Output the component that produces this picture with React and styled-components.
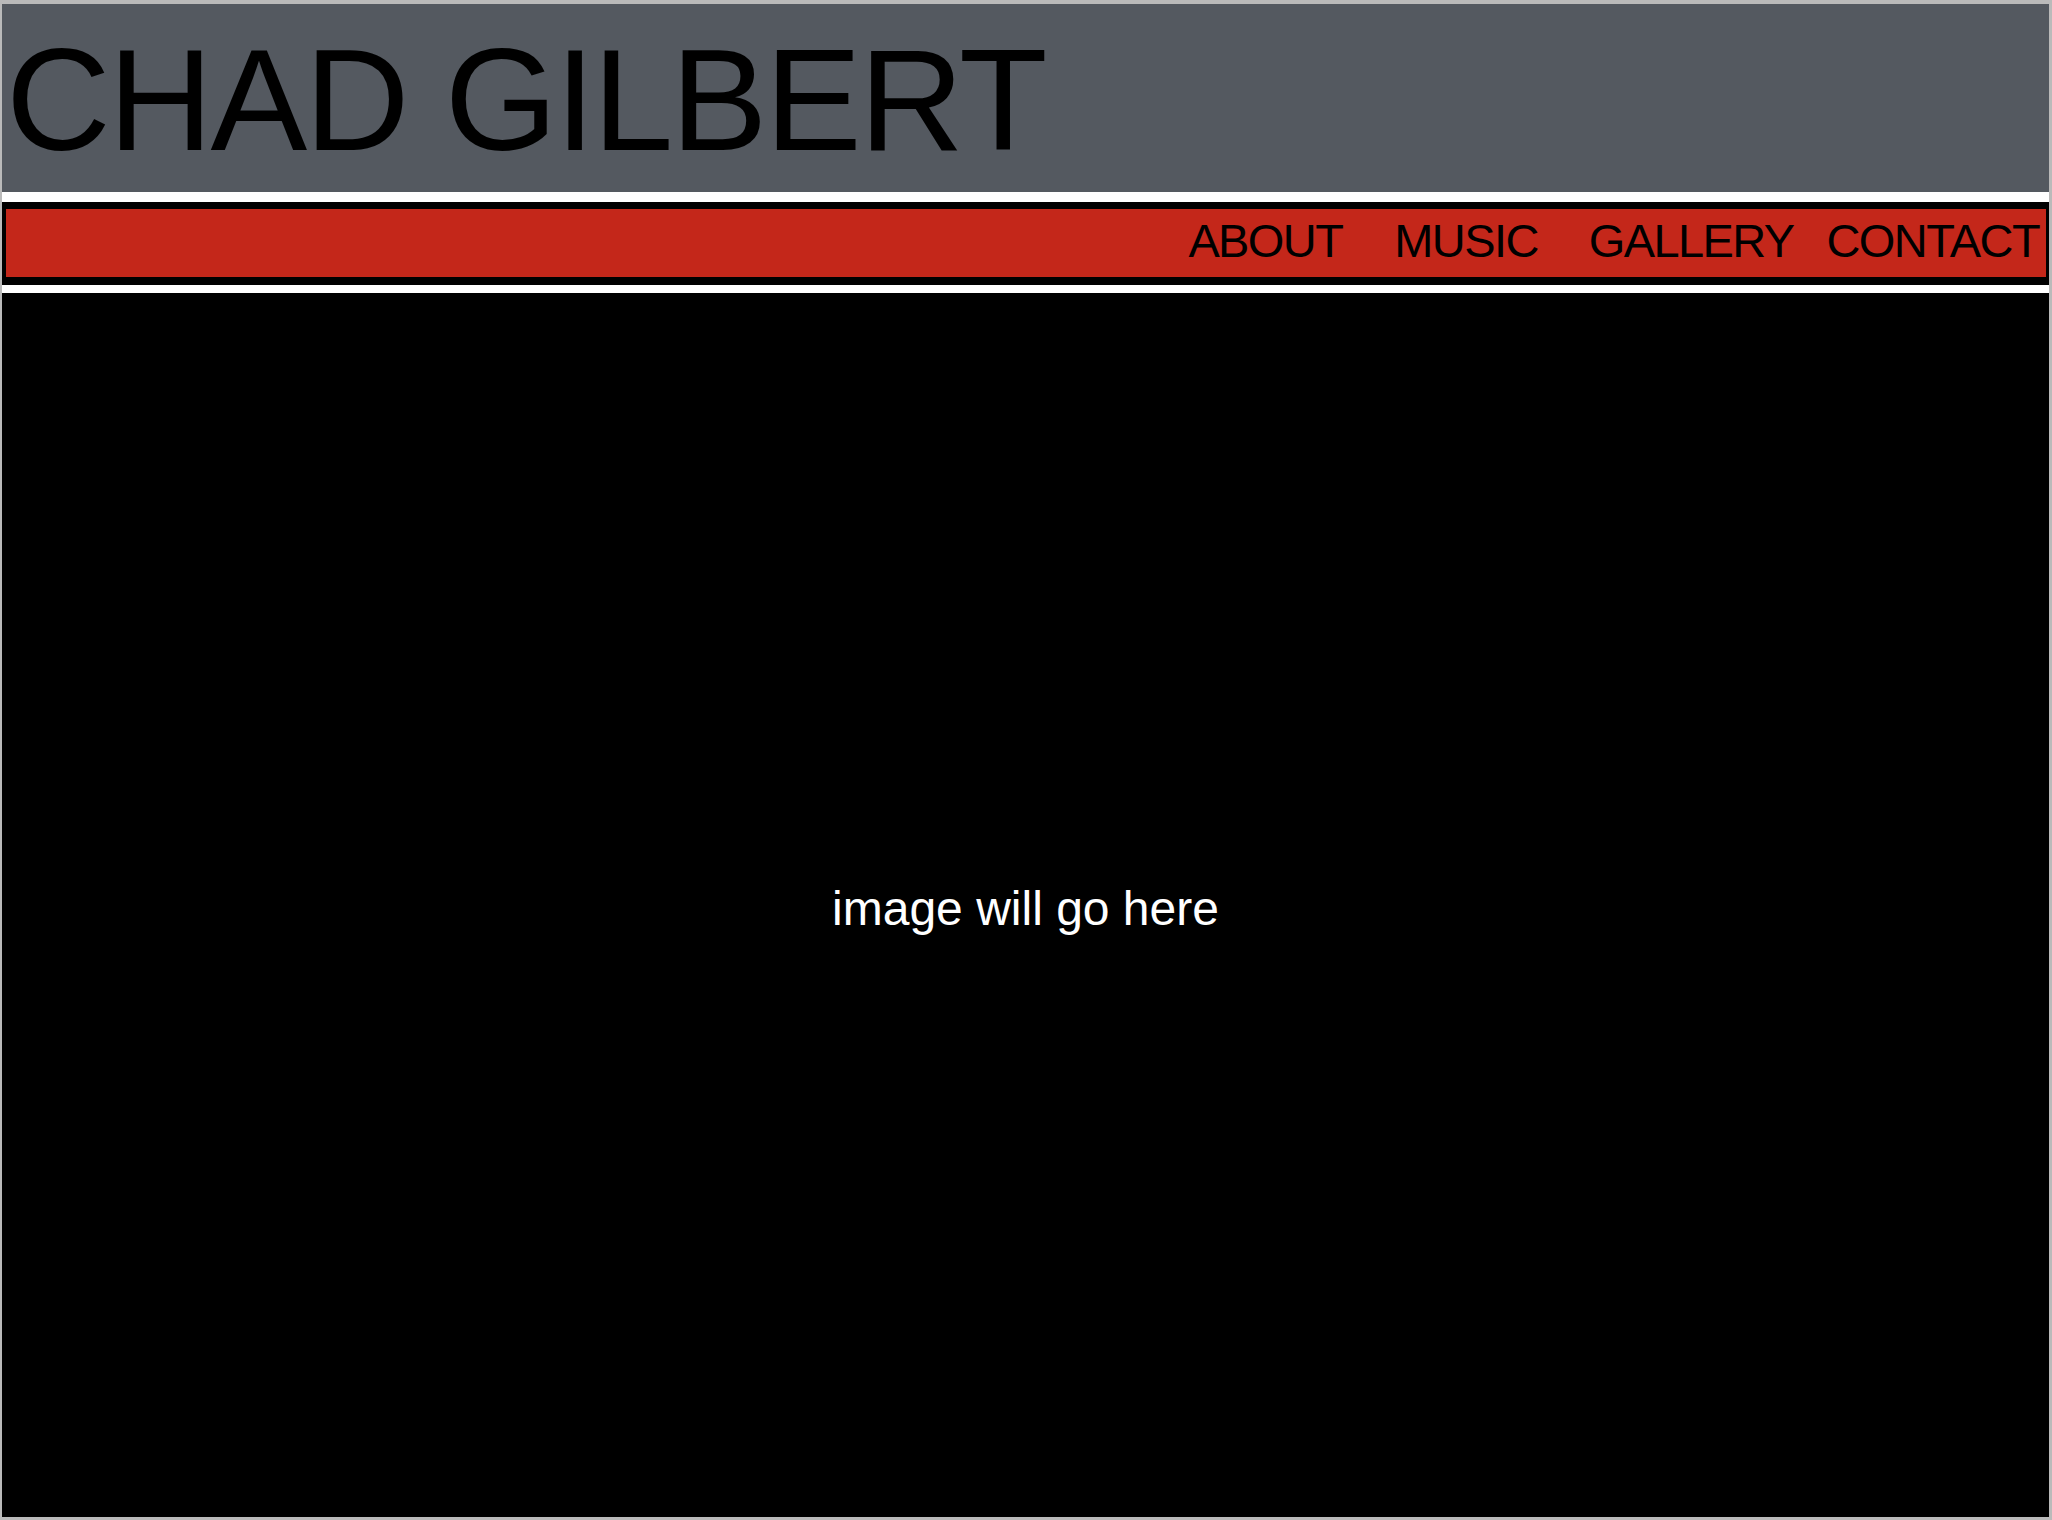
import React from "react";
import styled, { createGlobalStyle } from "styled-components";

const GlobalStyle = createGlobalStyle`
  html, body {
    margin: 0;
    padding: 0;
    background: #ffffff;
  }
  * {
    box-sizing: border-box;
  }
`;

// spacing before each link, as laid out in the mockup
const links = [
  { label: "ABOUT", space: 0 },
  { label: "MUSIC", space: 52 },
  { label: "GALLERY", space: 51 },
  { label: "CONTACT", space: 33 },
];

function App() {
  return (
    <>
      <GlobalStyle />
      <Frame>
        <Header>
          <Title>CHAD GILBERT</Title>
        </Header>
        <NavBar>
          <NavList>
            {links.map((link) => (
              <NavItem key={link.label} $space={link.space}>
                {link.label}
              </NavItem>
            ))}
          </NavList>
        </NavBar>
        <Hero>
          <Placeholder>image will go here</Placeholder>
        </Hero>
      </Frame>
    </>
  );
}

const Frame = styled.div`
  width: 2052px;
  height: 1520px;
  display: flex;
  flex-direction: column;
  background: #ffffff;
  border-style: solid;
  border-color: #bababa;
  border-width: 4px 3px 3px 2px;
  font-family: "Liberation Sans", Arial, sans-serif;
`;

const Header = styled.header`
  height: 188px;
  background-color: #545960;
  padding: 24px 0 0 4px;
`;

const Title = styled.h1`
  margin: 0;
  font-size: 145px;
  line-height: 1;
  font-weight: 300;
  letter-spacing: -2.5px;
  color: #000000;
`;

const NavBar = styled.nav`
  margin-top: 10px;
  height: 83px;
  background-color: #c4271a;
  border-style: solid;
  border-color: #000000;
  border-width: 7px 3px 8px 4px;
  display: flex;
  align-items: center;
  justify-content: flex-end;
  padding: 0 7px 6px 0;
`;

const NavList = styled.ul`
  list-style: none;
  margin: 0;
  padding: 0;
  display: flex;
`;

const NavItem = styled.li`
  margin-left: ${(p) => p.$space}px;
  font-size: 47px;
  line-height: 1;
  letter-spacing: -1.6px;
  color: #000000;
  cursor: pointer;
`;

const Hero = styled.main`
  margin-top: 8px;
  flex: 1;
  background-color: #000000;
  display: flex;
  align-items: center;
  justify-content: center;
  padding-top: 6px;
`;

const Placeholder = styled.p`
  margin: 0;
  font-size: 48px;
  font-weight: 300;
  color: #ffffff;
`;

export default App;
